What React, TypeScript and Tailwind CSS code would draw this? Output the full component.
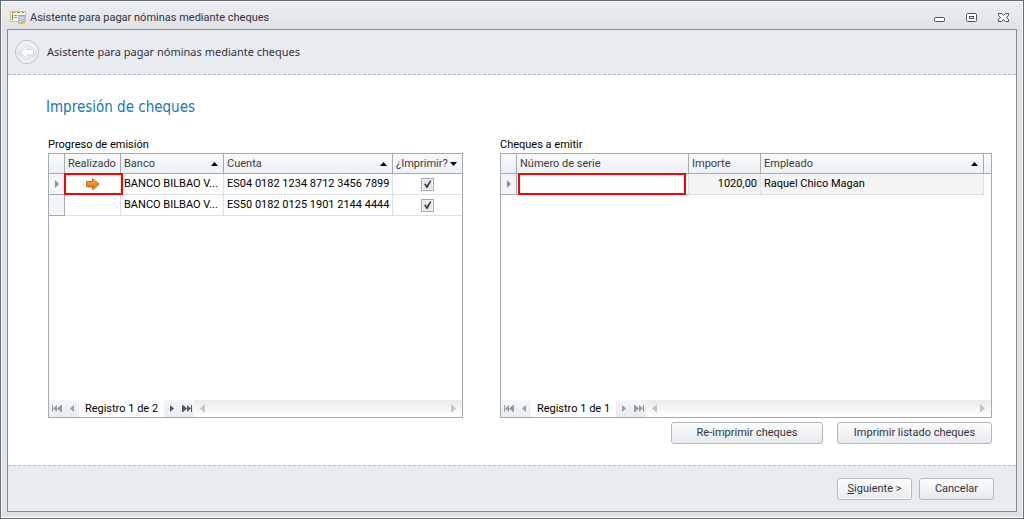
import type { ReactNode } from 'react';
import clsx from 'clsx';

interface Payment {
  readonly bank: string;
  readonly account: string;
  readonly current: boolean;
}

interface Cheque {
  readonly amount: string;
  readonly employee: string;
}

const TITLE = 'Asistente para pagar nóminas mediante cheques';

const payments: readonly Payment[] = [
  { bank: 'BANCO BILBAO V...', account: 'ES04 0182 1234 8712 3456 7899', current: true },
  { bank: 'BANCO BILBAO V...', account: 'ES50 0182 0125 1901 2144 4444', current: false },
];

const cheques: readonly Cheque[] = [{ amount: '1020,00', employee: 'Raquel Chico Magan' }];

function AppIcon() {
  return (
    <svg width="16" height="14" viewBox="0 0 16 14" aria-hidden="true">
      <rect x=".5" y=".5" width="15" height="10" fill="#fdf6df" stroke="#dcbd84" />
      <path d="M2 1.500h3M7 1.500h3M12 1.500h2" stroke="#a98a52" />
      <path d="M2.500 3v6" stroke="#4f8f4c" />
      <path d="M4 4.500h3M4 6.500h3" stroke="#9c9476" />
      <rect x="8" y="4" width="7" height="9" fill="#aebfd3" />
      <path d="M8 4.500h7" stroke="#8fa3bb" />
      <path d="M9 6.500h5M9 8.500h4M9 10.500h2" stroke="#d5e0ec" />
      <path d="M13.500 8.800l.8 1.500 1.700.3-1.200 1.200.3 1.700-1.600-.7-1.600.7.3-1.700-1.200-1.200 1.700-.3z" fill="#fdc30b" />
    </svg>
  );
}

function BackIcon() {
  return (
    <svg width="26" height="26" viewBox="0 0 26 26" aria-hidden="true">
      <defs>
        <linearGradient id="disc" x1="0" y1="0" x2="0" y2="1">
          <stop offset="0" stopColor="#f4f6f8" />
          <stop offset=".48" stopColor="#e6e9ed" />
          <stop offset=".52" stopColor="#d9dee4" />
          <stop offset="1" stopColor="#f1f5f8" />
        </linearGradient>
      </defs>
      <circle cx="13" cy="13" r="11.500" fill="url(#disc)" stroke="#b6bcc4" />
      <circle cx="13" cy="13" r="10.500" fill="none" stroke="#eef1f4" />
      <path
        d="M6.500 13.200l6.200-6.200c1.400-.4 2.100.5 1.500 1.700L12.800 10.500h5.700q1 0 1 1v3.500q0 1-1 1h-5.700l1.400 1.800c.6 1.200-.1 2.100-1.500 1.700z"
        fill="#fff"
        stroke="#c9ced4"
        strokeWidth=".8"
        strokeLinejoin="round"
      />
    </svg>
  );
}

function OrangeArrow() {
  return (
    <svg width="14" height="13" viewBox="0 0 14 13" className="mx-auto" aria-label="En curso">
      <defs>
        <linearGradient id="orange" x1="0" y1="0" x2="0" y2="1">
          <stop offset="0" stopColor="#fbb04c" />
          <stop offset="1" stopColor="#e06c0a" />
        </linearGradient>
      </defs>
      <path d="M1.500 5h5.500V2l6.500 5-6.500 6V10H1.500z" fill="#888" opacity=".45" />
      <path
        d="M.5 3.500H6.500V.5l6.500 5.500-6.500 5.500V8.500H.5z"
        fill="url(#orange)"
        stroke="#c8701c"
        strokeLinejoin="round"
      />
    </svg>
  );
}

function SortIcon({ down = false }: { readonly down?: boolean }) {
  return (
    <svg width="7" height="4" viewBox="0 0 7 4" className="shrink-0" aria-hidden="true">
      <path d={down ? 'M0 0h7L3.500 4z' : 'M0 4h7L3.500 0z'} fill="#000" />
    </svg>
  );
}

function RowMarker() {
  return (
    <svg width="4" height="8" viewBox="0 0 4 8" className="mx-auto" aria-hidden="true">
      <path d="M0 0l4 4-4 4z" fill="#8b9097" />
    </svg>
  );
}

function HeaderCell({
  children,
  sort,
  last = false,
}: {
  readonly children?: ReactNode;
  readonly sort?: 'up' | 'down';
  readonly last?: boolean;
}) {
  return (
    <th
      className={clsx(
        'h-5 border-b border-[#a3a9b5] bg-linear-to-b from-[#f8f9fb] to-[#edf0f4] p-0 text-left font-normal whitespace-nowrap text-[#3c3c3c]',
        !last && 'border-r',
      )}
    >
      <span className="flex items-center justify-between pr-[5px] pl-[3px]">
        <span>{children}</span>
        {sort && <SortIcon down={sort === 'down'} />}
      </span>
    </th>
  );
}

function MarkerCell({ active = false }: { readonly active?: boolean }) {
  return (
    <td className="h-[21px] border-r border-b border-[#a3a9b5] bg-[#f2f4f7] p-0">{active && <RowMarker />}</td>
  );
}

const cell = 'h-[21px] border-r border-b border-[#dcdfe4] px-[3px] py-0 whitespace-nowrap';

function NavButton({
  label,
  path,
  disabled = false,
}: {
  readonly label: string;
  readonly path: string;
  readonly disabled?: boolean;
}) {
  return (
    <button
      type="button"
      aria-label={label}
      disabled={disabled}
      className={clsx(
        'flex w-[15px] items-center justify-center bg-linear-to-b from-[#f5f7f9] to-[#e8ecf0]',
        disabled ? 'text-[#9b9b9b]' : 'text-[#55595e]',
      )}
    >
      <svg width="10" height="7" viewBox="0 0 10 7" fill="currentColor" aria-hidden="true">
        <path d={path} />
      </svg>
    </button>
  );
}

function Navigator({ total, canAdvance = false }: { readonly total: number; readonly canAdvance?: boolean }) {
  return (
    <div className="flex h-[17px] shrink-0">
      <NavButton label="Primero" path="M0 0h1v7H0zM1 3.500L5 0v7zM5 3.500L9 0v7zM9 0h1v7H9z" disabled />
      <NavButton label="Anterior" path="M3 3.500L7 0v7z" disabled />
      <span className="w-[85px] text-center leading-[17px]">Registro 1 de {total}</span>
      <NavButton label="Siguiente registro" path="M3 0v7l4-3.500z" disabled={!canAdvance} />
      <NavButton label="Último" path="M0 0h1v7H0zM1 0v7l4-3.500zM5 0v7l4-3.500zM9 0h1v7H9z" disabled={!canAdvance} />
      <div className="flex flex-1 items-center justify-between bg-linear-to-b from-[#ebebeb] to-white px-1.5">
        <svg width="5" height="9" viewBox="0 0 5 9" aria-hidden="true">
          <path d="M5 0v9L0 4.500z" fill="#c4c4c4" />
        </svg>
        <svg width="5" height="9" viewBox="0 0 5 9" aria-hidden="true">
          <path d="M0 0v9l5-4.500z" fill="#c4c4c4" />
        </svg>
      </div>
    </div>
  );
}

function Button({
  children,
  className,
  primary = false,
}: {
  readonly children: ReactNode;
  readonly className: string;
  readonly primary?: boolean;
}) {
  return (
    <button
      type="button"
      className={clsx(
        'h-[22px] rounded-[3px] border border-[#b3b8bf] bg-linear-to-b from-[#fbfcfd] to-[#e7eaee] text-[#32323c]',
        primary && 'inset-ring inset-ring-white',
        className,
      )}
    >
      {children}
    </button>
  );
}

function PaymentsGrid() {
  return (
    <section className="flex min-w-0 flex-col" aria-labelledby="payments-title">
      <h2 id="payments-title" className="h-4">
        Progreso de emisión
      </h2>
      <div className="flex flex-1 flex-col border border-[#a3a9b5]">
        <div className="flex-1">
          <table className="w-full table-fixed border-separate border-spacing-0">
            <colgroup>
              <col className="w-4" />
              <col className="w-14" />
              <col className="w-[103px]" />
              <col />
              <col className="w-[69px]" />
            </colgroup>
            <thead>
              <tr>
                <HeaderCell />
                <HeaderCell>Realizado</HeaderCell>
                <HeaderCell sort="up">Banco</HeaderCell>
                <HeaderCell sort="up">Cuenta</HeaderCell>
                <HeaderCell sort="down" last>
                  ¿Imprimir?
                </HeaderCell>
              </tr>
            </thead>
            <tbody>
              {payments.map((payment) => (
                <tr key={payment.account}>
                  <MarkerCell active={payment.current} />
                  <td className={clsx(cell, 'relative')}>
                    {payment.current && (
                      <>
                        <OrangeArrow />
                        <span className="absolute -top-px -right-[3px] -bottom-px -left-px border-2 border-[#f00]" />
                      </>
                    )}
                  </td>
                  <td className={cell}>{payment.bank}</td>
                  <td className={cell}>{payment.account}</td>
                  <td className="h-[21px] border-b border-[#dcdfe4] p-0">
                    <label className="relative mx-auto block size-[13px]">
                      <input
                        type="checkbox"
                        defaultChecked
                        aria-label={`Imprimir ${payment.account}`}
                        className="peer block size-[13px] appearance-none border border-[#a3a9b5] bg-[#e4e6e9] inset-ring inset-ring-[#f4f5f7]"
                      />
                      <svg
                        viewBox="0 0 13 13"
                        className="pointer-events-none absolute inset-0 hidden peer-checked:block"
                        aria-hidden="true"
                      >
                        <path d="M3 6l1.500-.5 1.300 1.800L9 2.500h1.500L6.500 10H5.500z" fill="#3c3c3c" />
                      </svg>
                    </label>
                  </td>
                </tr>
              ))}
            </tbody>
          </table>
        </div>
        <Navigator total={2} canAdvance />
      </div>
    </section>
  );
}

function ChequesGrid() {
  return (
    <section className="flex min-w-0 flex-col" aria-labelledby="cheques-title">
      <h2 id="cheques-title" className="h-4">
        Cheques a emitir
      </h2>
      <div className="flex flex-1 flex-col border border-[#a3a9b5]">
        <div className="flex-1">
          <table className="w-full table-fixed border-separate border-spacing-0">
            <colgroup>
              <col className="w-4" />
              <col className="w-[172px]" />
              <col className="w-[72px]" />
              <col />
              <col className="w-[7px]" />
            </colgroup>
            <thead>
              <tr>
                <HeaderCell />
                <HeaderCell>Número de serie</HeaderCell>
                <HeaderCell>Importe</HeaderCell>
                <HeaderCell sort="up">Empleado</HeaderCell>
                <HeaderCell last />
              </tr>
            </thead>
            <tbody>
              {cheques.map((cheque) => (
                <tr key={cheque.employee}>
                  <MarkerCell active />
                  <td className={clsx(cell, 'relative')}>
                    <input
                      type="text"
                      aria-label="Número de serie"
                      className="absolute -top-px right-0.5 -bottom-px left-px border-2 border-[#f00] bg-white px-1 outline-none"
                    />
                  </td>
                  <td className={clsx(cell, 'bg-[#f4f4f4] text-right')}>{cheque.amount}</td>
                  <td className={clsx(cell, 'bg-[#f4f4f4]')}>{cheque.employee}</td>
                  <td className="p-0" />
                </tr>
              ))}
            </tbody>
          </table>
        </div>
        <Navigator total={1} />
      </div>
    </section>
  );
}

export default function App() {
  return (
    <div className="flex min-h-screen flex-col border border-[#666b78] bg-[#e0e3e6] bg-linear-to-b from-[#edeef2] to-[#dfe2e4] to-[28px] font-['Roboto',sans-serif] text-[11px] leading-4 text-black inset-ring inset-ring-white">
      <header className="flex h-7 items-center gap-1 pt-1.5 pr-[13px] pl-[9px] text-[#32323c]">
        <AppIcon />
        <h1 className="flex-1">{TITLE}</h1>
        <div className="flex gap-5 text-[#4b5059]">
          <button type="button" aria-label="Minimizar" className="size-3">
            <svg viewBox="0 0 12 12" aria-hidden="true">
              <rect x=".5" y="5.500" width="10" height="4" rx="1" fill="#fff" stroke="currentColor" />
            </svg>
          </button>
          <button type="button" aria-label="Maximizar" className="size-3">
            <svg viewBox="0 0 12 12" aria-hidden="true">
              <rect x=".5" y="1.500" width="10" height="8" rx="1" fill="#fff" stroke="currentColor" />
              <rect x="3.500" y="4.500" width="4" height="2" fill="none" stroke="currentColor" />
            </svg>
          </button>
          <button type="button" aria-label="Cerrar" className="size-3">
            <svg viewBox="0 0 12 12" aria-hidden="true">
              <path
                d="M.5 1.500h3L5.500 3.500l2-2h3v2l-2 2 2 2v2h-3l-2-2-2 2h-3v-2l2-2-2-2z"
                fill="#fff"
                stroke="currentColor"
              />
            </svg>
          </button>
        </div>
      </header>

      <main className="mx-1.5 mb-1.5 flex flex-1 flex-col border border-[#858b90] bg-white">
        <div className="flex h-[45px] items-center gap-[7px] border-b border-dashed border-[#b2b8c6] bg-[#e8ebf0] pl-1.5 text-[#32323c]">
          <button type="button" aria-label="Atrás">
            <BackIcon />
          </button>
          <p className="font-['Noto_Sans',sans-serif]">{TITLE}</p>
        </div>

        <div className="flex flex-1 flex-col pt-5 pr-6 pb-[21px] pl-10">
          <h2 className="-ml-0.5 font-['DejaVu_Sans_Condensed','DejaVu_Sans',sans-serif] text-[15px] leading-6 text-[#1877b4]">
            Impresión de cheques
          </h2>
          <div className="mt-[18px] grid flex-1 grid-cols-[415fr_492fr] gap-[37px]">
            <PaymentsGrid />
            <ChequesGrid />
          </div>
          <div className="mt-1 flex justify-end gap-3.5">
            <Button className="w-[152px]">Re-imprimir cheques</Button>
            <Button className="w-[155px]">Imprimir listado cheques</Button>
          </div>
        </div>

        <footer className="flex h-[46px] items-center justify-end gap-[7px] border-t border-dashed border-[#b2b8c6] bg-[#e8ebf0] pr-[22px]">
          <Button className="w-[75px]" primary>
            <span className="underline">S</span>iguiente &gt;
          </Button>
          <Button className="w-[75px]">Cancelar</Button>
        </footer>
      </main>
    </div>
  );
}
